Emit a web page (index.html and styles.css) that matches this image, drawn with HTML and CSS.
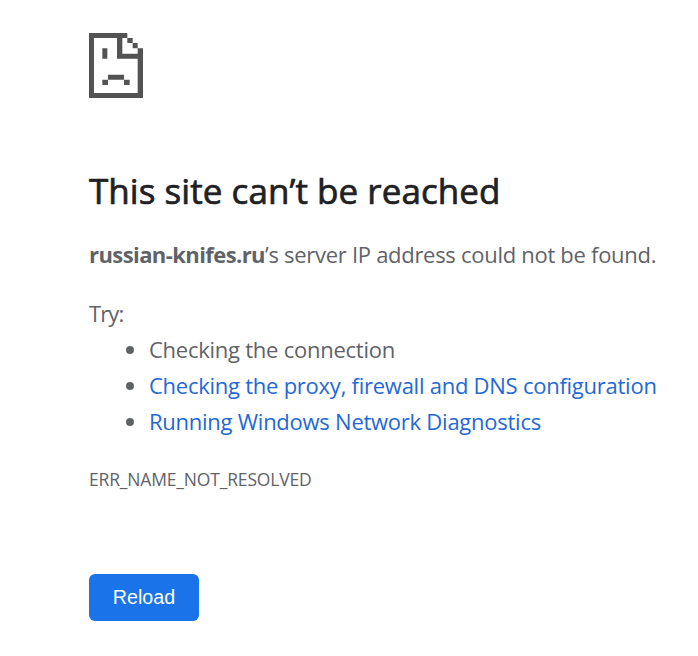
FILE: index.html
```html
<!DOCTYPE html>
<html lang="en">
<head>
    <meta charset="UTF-8">
    <meta name="viewport" content="width=device-width, initial-scale=1.0">
    <title>russian-knifes.ru</title>
    <link rel="stylesheet" href="styles.css">
</head>
<body>
    <main class="error-page">
        <svg class="icon" viewBox="0 0 162 195" aria-hidden="true">
            <path d="M0 0H115V15H100V62H146V46H162V195H0ZM15 15V180H146V77H84V15Z" fill-rule="evenodd"/>
            <path d="M115 15h16v15h-16zM131 30h15v16h-15z"/>
            <path d="M40 46h15v31H40zM57 125h48v15H57zM40 140h17v16H40zM105 140h17v16h-17z"/>
        </svg>

        <h1 class="title">This site can’t be reached</h1>
        <p class="summary"><strong>russian-knifes.ru</strong><span>’s server IP address could not be found.</span></p>

        <div class="suggestions">
            <p>Try:</p>
            <ul>
                <li>Checking the connection</li>
                <li><a href="#">Checking the proxy, firewall and DNS configuration</a></li>
                <li><a href="#">Running Windows Network Diagnostics</a></li>
            </ul>
        </div>

        <div class="error-code">ERR_NAME_NOT_RESOLVED</div>
        <button class="btn-reload">Reload</button>
    </main>
</body>
</html>
```

FILE: styles.css
```css
body {
    margin: 0;
    background-color: #fff;
    color: #5f6368;
    font-family: "Segoe UI", "Open Sans", sans-serif;
    font-size: 22px;
    line-height: 36px;
}

.error-page {
    padding: 33px 0 0 89px;
    white-space: nowrap;
}

.icon {
    display: block;
    width: 54px;
    height: 65px;
    fill: #535353;
}

.title {
    margin: 70px 0 23px;
    color: #202124;
    font-size: 35px;
    font-weight: 500;
    line-height: 45px;
    letter-spacing: 0.05px;
    -webkit-text-stroke: 0.7px #202124;
}

.summary {
    margin: 0;
    letter-spacing: -0.29px;
}

.summary strong {
    letter-spacing: -0.58px;
}

.suggestions {
    margin-top: 23px;
    letter-spacing: -0.25px;
}

.suggestions p,
.suggestions ul {
    margin: 0;
}

.suggestions p {
    letter-spacing: -0.9px;
}

.suggestions ul {
    padding-left: 60px;
}

a {
    color: #2468d6;
    text-decoration: none;
}

.error-code {
    margin-top: 22px;
    font-size: 17.5px;
    letter-spacing: -0.17px;
}

.btn-reload {
    display: block;
    width: 110px;
    height: 47px;
    margin-top: 77px;
    padding: 0;
    border: none;
    border-radius: 6px;
    background-color: #1a73e8;
    color: #fff;
    font-family: Arial, "Liberation Sans", sans-serif;
    font-size: 19.7px;
    cursor: pointer;
}
```
